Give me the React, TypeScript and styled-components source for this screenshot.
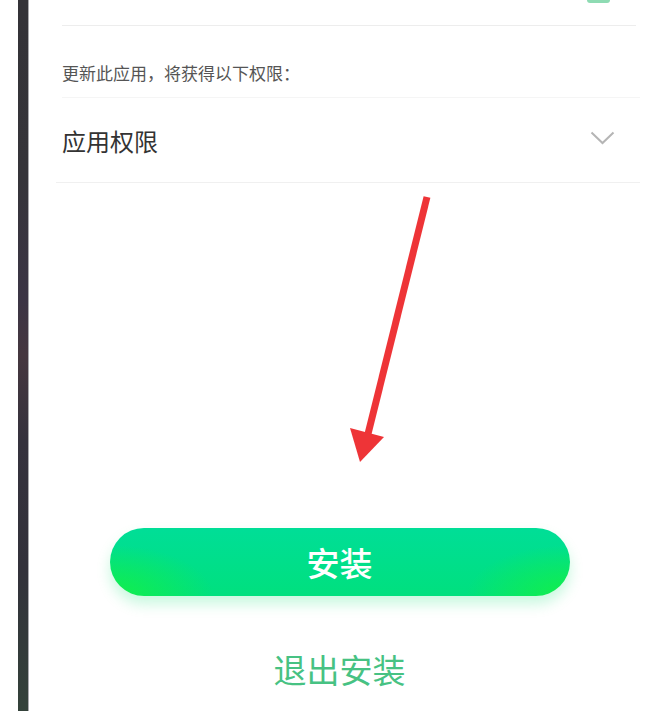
import React from 'react';
import styled, {createGlobalStyle} from 'styled-components';

const GlobalStyle = createGlobalStyle`
    html, body {
        margin: 0;
        padding: 0;
        background: #ffffff;
    }
    body {
        font-family: "Noto Sans CJK SC", "Noto Sans", sans-serif;
    }
`;

const Page = styled.div`
    position: relative;
    display: flex;
    width: 650px;
    height: 711px;
    overflow: hidden;
    background: #ffffff;
`;

const Gutter = styled.div`
    width: 18px;
    flex-shrink: 0;
    background: #ffffff;
`;

const Bezel = styled.div`
    width: 10px;
    flex-shrink: 0;
    border-right: 1px solid #a9a9ad;
    background: linear-gradient(
        180deg,
        #343338 0%,
        #353439 25%,
        #3b3545 42%,
        #45373f 50%,
        #35323d 62%,
        #32313a 80%,
        #34423a 100%
    );
`;

const Screen = styled.div`
    flex: 1;
    display: flex;
    flex-direction: column;
    background: #ffffff;
`;

const TopRow = styled.div`
    height: 25px;
    margin: 0 14px 0 33px;
    border-bottom: 1px solid #ededed;
    display: flex;
    justify-content: flex-end;
    align-items: flex-start;
`;

const GreenTab = styled.div`
    width: 23px;
    height: 3px;
    margin-right: 26px;
    border-radius: 0 0 4px 4px;
    background: #8edbb3;
`;

const Notice = styled.div`
    margin: 0 10px 0 33px;
    padding: 37px 0 14px;
    font-size: 17px;
    line-height: 20px;
    color: #555555;
    border-bottom: 1px solid #f5f5f5;
`;

const PermissionRow = styled.div`
    height: 84px;
    margin: 0 10px 0 27px;
    padding: 0 25px 0 6px;
    display: flex;
    align-items: center;
    justify-content: space-between;
    border-bottom: 1px solid #f0f0f0;
`;

const PermissionTitle = styled.span`
    font-size: 24px;
    color: #333333;
`;

const Chevron = styled.svg`
    width: 25px;
    height: 14px;
    margin-top: -4px;
`;

const Actions = styled.div`
    margin-top: 345px;
    display: flex;
    flex-direction: column;
    align-items: center;
`;

const InstallButton = styled.button`
    width: 460px;
    height: 68px;
    border: none;
    border-radius: 34px;
    padding: 0;
    font-family: inherit;
    font-size: 33px;
    font-weight: 500;
    color: #ffffff;
    cursor: pointer;
    background:
        radial-gradient(ellipse 30% 100% at 0% 100%, rgba(20, 240, 70, 0.95) 0%, rgba(20, 240, 70, 0) 75%),
        radial-gradient(ellipse 30% 100% at 100% 100%, rgba(20, 240, 70, 0.95) 0%, rgba(20, 240, 70, 0) 75%),
        linear-gradient(180deg, #00de97 0%, #00e07e 100%);
    box-shadow: 0 8px 14px rgba(0, 225, 110, 0.22);
`;

const ExitLink = styled.div`
    margin-top: 55px;
    font-size: 33px;
    line-height: 36px;
    color: #47c283;
`;

const ArrowOverlay = styled.svg`
    position: absolute;
    left: 0;
    top: 0;
    width: 650px;
    height: 711px;
    pointer-events: none;
`;

export default function App() {
    return (
        <>
            <GlobalStyle/>
            <Page>
                <Gutter/>
                <Bezel/>
                <Screen>
                    <TopRow>
                        <GreenTab/>
                    </TopRow>
                    <Notice>更新此应用，将获得以下权限：</Notice>
                    <PermissionRow>
                        <PermissionTitle>应用权限</PermissionTitle>
                        <Chevron viewBox="0 0 25 14">
                            <polyline points="1.5,1.5 12.5,12 23.5,1.5" fill="none" stroke="#b5b5b5" strokeWidth="2"/>
                        </Chevron>
                    </PermissionRow>
                    <Actions>
                        <InstallButton>安装</InstallButton>
                        <ExitLink>退出安装</ExitLink>
                    </Actions>
                </Screen>
                <ArrowOverlay viewBox="0 0 650 711">
                    <line x1="427" y1="197" x2="368" y2="434" stroke="#ee3437" strokeWidth="7"/>
                    <polygon points="350,428 384,437 360,462" fill="#ee3437"/>
                </ArrowOverlay>
            </Page>
        </>
    );
}
